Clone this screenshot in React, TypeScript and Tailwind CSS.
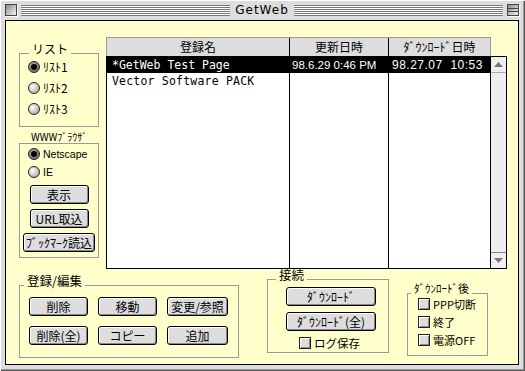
import React from "react";

const jp = "font-['Noto_Sans_CJK_JP',sans-serif]";
const stripes =
  "bg-[repeating-linear-gradient(to_bottom,#777777_0px,#777777_1px,#ffffff_1px,#ffffff_2px)]";

type GroupProps = {
  label: string;
  className?: string;
  labelClass?: string;
  children?: React.ReactNode;
};

function Group({ label, className = "", labelClass = "", children }: GroupProps) {
  return (
    <div className={"relative border border-[#999999] " + className}>
      <span className={"absolute bg-[#ffffcc] px-[3px] whitespace-nowrap " + labelClass}>{label}</span>
      {children}
    </div>
  );
}

function Btn({ children, className = "" }: { children: React.ReactNode; className?: string }) {
  return (
    <div
      className={
        "flex items-center justify-center border border-black rounded-[3px] bg-[#dddddd] shadow-[inset_1px_1px_0_#ffffff,inset_-1px_-1px_0_#888888] text-[12px] leading-[14px] whitespace-nowrap " +
        className
      }
    >
      {children}
    </div>
  );
}

function Radio({ checked = false }: { checked?: boolean }) {
  return (
    <div
      className={
        "w-[12px] h-[12px] rounded-full border border-[#222222] flex items-center justify-center shrink-0 " +
        (checked
          ? "bg-[radial-gradient(circle_at_40%_40%,#bbbbbb,#555555)]"
          : "bg-[radial-gradient(circle_at_35%_35%,#ffffff,#999999)]")
      }
    >
      {checked && <div className="w-[6px] h-[6px] rounded-full bg-black" />}
    </div>
  );
}

function Check() {
  return (
    <div className="w-[12px] h-[12px] border border-[#222222] bg-[#dddddd] shadow-[inset_1px_1px_0_#ffffff,inset_-1px_-1px_0_#888888] shrink-0" />
  );
}

export default function App() {
  return (
    <div
      className={
        "w-[525px] h-[371px] bg-[#dddddd] flex flex-col shadow-[inset_1px_1px_0_#ffffff,inset_-1px_-1px_0_#555555,inset_-2px_-2px_0_#999999] text-black " +
        jp
      }
    >
      {/* Title bar */}
      <div className="h-[20px] flex items-center pl-[5px] pr-[6px]">
        <div className="w-[12px] h-[12px] border border-[#444444] bg-[linear-gradient(135deg,#888888,#f4f4f4)] shadow-[1px_1px_0_#ffffff]" />
        <div className={"flex-1 h-[11px] ml-[4px] " + stripes} />
        <div className="px-[5px] text-[12px] leading-[14px] tracking-[1px] font-normal font-['DejaVu_Sans',sans-serif]">
          GetWeb
        </div>
        <div className={"flex-1 h-[11px] mr-[4px] " + stripes} />
        <div className="w-[12px] h-[12px] border border-[#444444] bg-[linear-gradient(135deg,#888888,#f4f4f4)] shadow-[1px_1px_0_#ffffff] flex flex-col">
          <div className="flex-1 border-b border-[#444444]" />
          <div className="flex-1 border-b border-[#444444]" />
          <div className="flex-1" />
        </div>
      </div>

      {/* Content */}
      <div className="ml-[5px] w-[514px] h-[345px] border border-black bg-[#ffffcc] flex flex-col">
        {/* top row */}
        <div className="flex items-start pt-[16px] pl-[13px]">
          {/* left column */}
          <div className="w-[80px] mt-[16px] flex flex-col gap-[16px]">
            <Group label="リスト" className="h-[74px]" labelClass="left-[9px] -top-[11px] text-[12px] leading-[12px]">
              <div className="flex flex-col gap-[7px] pt-[6px] pl-[8px]">
                {["ﾘｽﾄ1", "ﾘｽﾄ2", "ﾘｽﾄ3"].map((t, i) => (
                  <div key={t} className="h-[14px] flex items-center gap-[3px]">
                    <Radio checked={i === 0} />
                    <span className="text-[12px] leading-[14px]">{t}</span>
                  </div>
                ))}
              </div>
            </Group>
            <Group label="WWWﾌﾞﾗｳｻﾞ" className="h-[115px]" labelClass="left-[8px] -top-[12px] text-[10px] leading-[10px]">
              <div className="flex flex-col pt-[3px] pl-[8px] gap-[4px]">
                <div className="h-[14px] flex items-center gap-[3px]">
                  <Radio checked />
                  <span className="text-[10.5px] leading-[14px] font-['Liberation_Sans',sans-serif]">Netscape</span>
                </div>
                <div className="h-[14px] flex items-center gap-[3px]">
                  <Radio />
                  <span className="text-[10.5px] leading-[14px] font-['Liberation_Sans',sans-serif]">IE</span>
                </div>
              </div>
              <div className="flex flex-col items-center mt-[6px] gap-[5px]">
                <Btn className="w-[59px] h-[19px]">表示</Btn>
                <Btn className="w-[59px] h-[19px]">URL取込</Btn>
                <Btn className="w-[72px] h-[19px] text-[11.5px]">ﾌﾞｯｸﾏｰｸ読込</Btn>
              </div>
            </Group>
          </div>

          {/* table */}
          <div className="ml-[7px] w-[401px] flex flex-col">
            <div className="w-[385px] h-[19px] flex border-t border-x border-[#999999] bg-[#dddddd] text-[12px] leading-[18px]">
              <div className="w-[182px] text-center">登録名</div>
              <div className="w-[99px] border-l border-black text-center">更新日時</div>
              <div className="flex-1 border-l border-black text-center">ﾀﾞｳﾝﾛｰﾄﾞ日時</div>
            </div>
            <div className="h-[213px] border border-black bg-white flex">
              <div className="w-[182px] flex flex-col text-[11.5px] leading-[16px] font-['DejaVu_Sans_Mono',monospace]">
                <div className="h-[16px] bg-black text-white pl-[5px] whitespace-pre">*GetWeb Test Page</div>
                <div className="h-[16px] pl-[5px] whitespace-pre tracking-[0.2px]">Vector Software PACK</div>
              </div>
              <div className="w-[99px] border-l border-black flex flex-col text-[11.5px] leading-[16px] font-['Liberation_Sans',sans-serif]">
                <div className="h-[16px] bg-black text-white pl-[2px] whitespace-pre">98.6.29 0:46 PM</div>
              </div>
              <div className="flex-1 border-l border-black flex flex-col text-[12px] leading-[16px] font-['Liberation_Sans',sans-serif]">
                <div className="h-[16px] bg-black text-white pl-[3px] whitespace-pre tracking-[0.5px]">98.27.07  10:53</div>
              </div>
              <div className="w-[16px] border-l border-black bg-[#eeeeee] flex flex-col justify-between">
                <div className="h-[16px] border-b border-[#aaaaaa] flex items-center justify-center">
                  <svg width="9" height="5" viewBox="0 0 9 5">
                    <path d="M0 5 L4.5 0 L9 5 Z" fill="#777777" />
                  </svg>
                </div>
                <div className="h-[16px] border-t border-[#888888] flex items-center justify-center">
                  <svg width="9" height="5" viewBox="0 0 9 5">
                    <path d="M0 0 L4.5 5 L9 0 Z" fill="#777777" />
                  </svg>
                </div>
              </div>
            </div>
          </div>
        </div>

        {/* bottom row */}
        <div className="flex items-start mt-[10px]">
          <Group label="登録/編集" className="ml-[13px] mt-[6px] w-[220px] h-[73px]" labelClass="left-[4px] -top-[11px] text-[12.5px] leading-[12px]">
            <div className="grid grid-cols-[59px_59px_61px] gap-x-[10px] gap-y-[10px] pt-[11px] pl-[9px]">
              <Btn className="h-[19px]">削除</Btn>
              <Btn className="h-[19px]">移動</Btn>
              <Btn className="h-[19px]">変更/参照</Btn>
              <Btn className="h-[19px]">削除(全)</Btn>
              <Btn className="h-[19px]">コピー</Btn>
              <Btn className="h-[19px]">追加</Btn>
            </div>
          </Group>

          <Group label="接続" className="ml-[28px] w-[122px] h-[74px]" labelClass="left-[8px] -top-[11px] text-[12.5px] leading-[12px]">
            <div className="flex flex-col pl-[18px] pt-[7px] gap-[6px]">
              <Btn className="w-[90px] h-[19px] text-[11px]">ﾀﾞｳﾝﾛｰﾄﾞ</Btn>
              <Btn className="w-[90px] h-[19px] text-[11px]">ﾀﾞｳﾝﾛｰﾄﾞ(全)</Btn>
            </div>
            <div className="h-[14px] flex items-center gap-[3px] ml-[31px] mt-[5px]">
              <Check />
              <span className="text-[11.5px] leading-[14px]">ログ保存</span>
            </div>
          </Group>

          <Group label="ﾀﾞｳﾝﾛｰﾄﾞ後" className="ml-[18px] mt-[14px] w-[81px] h-[63px]" labelClass="left-[3px] -top-[11px] text-[11px] leading-[11px]">
            <div className="flex flex-col pt-[3px] pl-[10px] gap-[4px]">
              {["PPP切断", "終了", "電源OFF"].map((t) => (
                <div key={t} className="h-[14px] flex items-center gap-[3px]">
                  <Check />
                  <span className="text-[11px] leading-[14px]">{t}</span>
                </div>
              ))}
            </div>
          </Group>
        </div>
      </div>
    </div>
  );
}
